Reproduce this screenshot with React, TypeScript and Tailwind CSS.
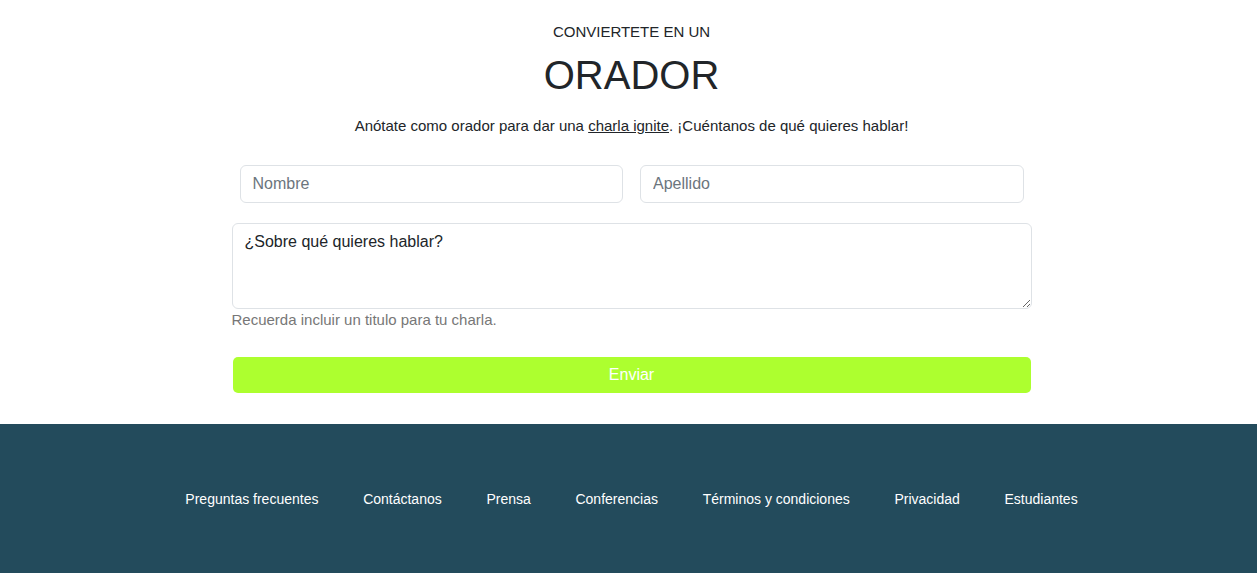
export default function App() {
    return (
        <div className="min-h-screen bg-white font-['Liberation_Sans',Arial,sans-serif] text-[#212529]">
            <section className="pt-[24px] pb-[31px] pl-[6px]">
                <div className="mx-auto w-[800px] flex flex-col items-center">
                    <p className="text-[15px] leading-[16px] uppercase">Conviertete en un</p>
                    <h1 className="text-[40px] leading-[50px] mt-[10px]">ORADOR</h1>
                    <p className="text-[15px] leading-[20px] mt-[16px]">
                        Anótate como orador para dar una{" "}
                        <a href="#" className="underline text-[#212529]">charla ignite</a>. ¡Cuéntanos de qué quieres hablar!
                    </p>
                </div>

                <form className="mx-auto w-[800px] mt-[29px]" onSubmit={(e) => e.preventDefault()}>
                    <div className="flex gap-[17px] px-[8px]">
                        <input
                            type="text"
                            placeholder="Nombre"
                            className="flex-1 h-[38px] px-[12px] text-[16px] border border-[#dee2e6] rounded-[6px] placeholder:text-[#6c757d] outline-none"
                        />
                        <input
                            type="text"
                            placeholder="Apellido"
                            className="flex-1 h-[38px] px-[12px] text-[16px] border border-[#dee2e6] rounded-[6px] placeholder:text-[#6c757d] outline-none"
                        />
                    </div>

                    <textarea
                        placeholder="¿Sobre qué quieres hablar?"
                        className="block w-full mt-[20px] h-[86px] px-[12px] py-[6px] text-[16px] leading-[24px] border border-[#dee2e6] rounded-[6px] placeholder:text-[#212529] outline-none"
                    />
                    <p className="text-[15px] leading-[22px] text-[#777777]">Recuerda incluir un titulo para tu charla.</p>

                    <button
                        type="submit"
                        className="block w-[798px] ml-[1px] mt-[26px] h-[36px] rounded-[5px] bg-[#adff2f] text-white text-[16px]"
                    >
                        Enviar
                    </button>
                </form>
            </section>

            <footer className="bg-[#234b5c] h-[149px] flex items-center justify-center pl-[6px]">
                <ul className="flex gap-[44.7px] text-white text-[14px] mt-[1px]">
                    <li><a href="#">Preguntas frecuentes</a></li>
                    <li><a href="#">Contáctanos</a></li>
                    <li><a href="#">Prensa</a></li>
                    <li><a href="#">Conferencias</a></li>
                    <li><a href="#">Términos y condiciones</a></li>
                    <li><a href="#">Privacidad</a></li>
                    <li><a href="#">Estudiantes</a></li>
                </ul>
            </footer>
        </div>
    );
}
